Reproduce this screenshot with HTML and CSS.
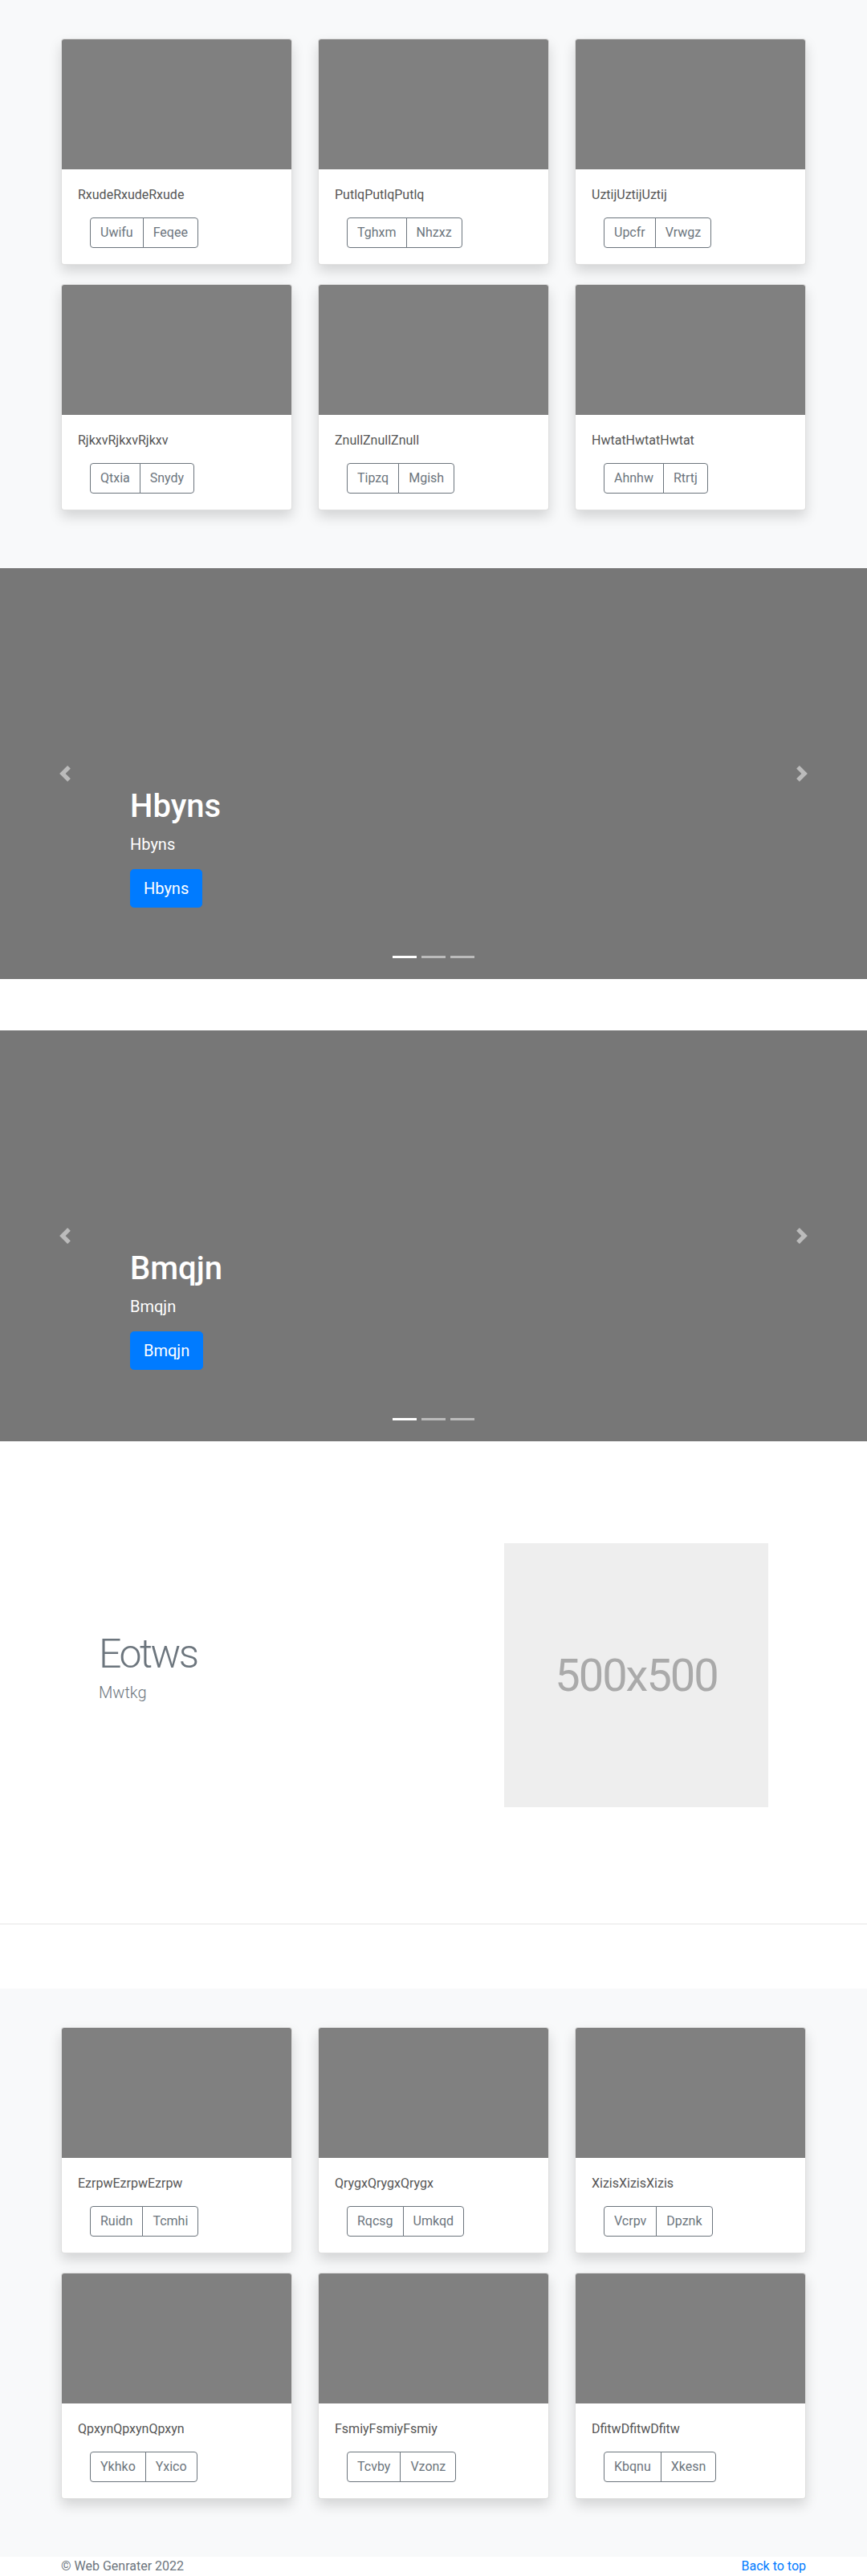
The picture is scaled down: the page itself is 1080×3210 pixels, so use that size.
FILE: index.html
```html
<!DOCTYPE html>
<html lang="en">
<head>
<meta charset="utf-8">
<title>Web Genrater</title>
<link rel="stylesheet" href="styles.css">
</head>
<body>
<main>
  <section class="album">
    <div class="grid">
      <div class="card"><div class="card-img"></div><div class="card-body"><p class="card-text">RxudeRxudeRxude</p><div class="btn-group"><button class="btn">Uwifu</button><button class="btn">Feqee</button></div></div></div>
      <div class="card"><div class="card-img"></div><div class="card-body"><p class="card-text">PutlqPutlqPutlq</p><div class="btn-group"><button class="btn">Tghxm</button><button class="btn">Nhzxz</button></div></div></div>
      <div class="card"><div class="card-img"></div><div class="card-body"><p class="card-text">UztijUztijUztij</p><div class="btn-group"><button class="btn">Upcfr</button><button class="btn">Vrwgz</button></div></div></div>
      <div class="card"><div class="card-img"></div><div class="card-body"><p class="card-text">RjkxvRjkxvRjkxv</p><div class="btn-group"><button class="btn">Qtxia</button><button class="btn">Snydy</button></div></div></div>
      <div class="card"><div class="card-img"></div><div class="card-body"><p class="card-text">ZnullZnullZnull</p><div class="btn-group"><button class="btn">Tipzq</button><button class="btn">Mgish</button></div></div></div>
      <div class="card"><div class="card-img"></div><div class="card-body"><p class="card-text">HwtatHwtatHwtat</p><div class="btn-group"><button class="btn">Ahnhw</button><button class="btn">Rtrtj</button></div></div></div>
    </div>
  </section>

  <div class="carousel">
    <ol class="indicators"><li class="active"></li><li></li><li></li></ol>
    <div class="caption">
      <h1 class="caption-title">Hbyns</h1>
      <p class="caption-text">Hbyns</p>
      <div class="caption-action"><a class="btn-primary" href="#">Hbyns</a></div>
    </div>
    <a class="control prev" href="#"><svg viewBox="0 0 8 8" width="20" height="20"><path d="M5.25 0l-4 4 4 4 1.5-1.5L4.25 4l2.5-2.5L5.25 0z"/></svg></a>
    <a class="control next" href="#"><svg viewBox="0 0 8 8" width="20" height="20"><path d="M2.75 0l-1.5 1.5L3.75 4l-2.5 2.5L2.75 8l4-4-4-4z"/></svg></a>
  </div>

  <div class="carousel">
    <ol class="indicators"><li class="active"></li><li></li><li></li></ol>
    <div class="caption">
      <h1 class="caption-title">Bmqjn</h1>
      <p class="caption-text">Bmqjn</p>
      <div class="caption-action"><a class="btn-primary" href="#">Bmqjn</a></div>
    </div>
    <a class="control prev" href="#"><svg viewBox="0 0 8 8" width="20" height="20"><path d="M5.25 0l-4 4 4 4 1.5-1.5L4.25 4l2.5-2.5L5.25 0z"/></svg></a>
    <a class="control next" href="#"><svg viewBox="0 0 8 8" width="20" height="20"><path d="M2.75 0l-1.5 1.5L3.75 4l-2.5 2.5L2.75 8l4-4-4-4z"/></svg></a>
  </div>

  <section class="feature">
    <div class="feature-text">
      <h2 class="feature-heading">Eotws</h2>
      <p class="feature-lead">Mwtkg</p>
    </div>
    <div class="placeholder">500x500</div>
  </section>

  <hr class="divider">

  <section class="album">
    <div class="grid">
      <div class="card"><div class="card-img"></div><div class="card-body"><p class="card-text">EzrpwEzrpwEzrpw</p><div class="btn-group"><button class="btn">Ruidn</button><button class="btn">Tcmhi</button></div></div></div>
      <div class="card"><div class="card-img"></div><div class="card-body"><p class="card-text">QrygxQrygxQrygx</p><div class="btn-group"><button class="btn">Rqcsg</button><button class="btn">Umkqd</button></div></div></div>
      <div class="card"><div class="card-img"></div><div class="card-body"><p class="card-text">XizisXizisXizis</p><div class="btn-group"><button class="btn">Vcrpv</button><button class="btn">Dpznk</button></div></div></div>
      <div class="card"><div class="card-img"></div><div class="card-body"><p class="card-text">QpxynQpxynQpxyn</p><div class="btn-group"><button class="btn">Ykhko</button><button class="btn">Yxico</button></div></div></div>
      <div class="card"><div class="card-img"></div><div class="card-body"><p class="card-text">FsmiyFsmiyFsmiy</p><div class="btn-group"><button class="btn">Tcvby</button><button class="btn">Vzonz</button></div></div></div>
      <div class="card"><div class="card-img"></div><div class="card-body"><p class="card-text">DfitwDfitwDfitw</p><div class="btn-group"><button class="btn">Kbqnu</button><button class="btn">Xkesn</button></div></div></div>
    </div>
  </section>
</main>

<footer class="footer">
  <p class="footer-copy">&copy; Web Genrater 2022</p>
  <p class="footer-top"><a href="#">Back to top</a></p>
</footer>
</body>
</html>
```

FILE: styles.css
```css
* { box-sizing: border-box; }

html, body { overflow-x: hidden; }

body {
  margin: 0;
  font-family: Roboto, "Liberation Sans", Arial, sans-serif;
  font-size: 16px;
  line-height: 1.5;
  color: #212529;
  background: #fff;
}

/* Album sections */
.album {
  background: #f8f9fa;
  padding: 48px 0 72px;
}

.grid {
  width: 928px;
  margin: 0 auto;
  display: grid;
  grid-template-columns: repeat(3, 288px);
  column-gap: 32px;
  row-gap: 24px;
}

.card {
  background: #fff;
  border: 1px solid rgba(0, 0, 0, 0.125);
  border-radius: 4px;
  box-shadow: 0 8px 16px rgba(0, 0, 0, 0.15);
  overflow: hidden;
}

.card-img {
  height: 162px;
  background: #808080;
}

.card-body {
  padding: 20px;
}

.card-text {
  margin: 0 0 16px;
  color: #555;
}

.btn-group {
  display: flex;
  width: max-content;
  margin-left: 15px;
}

.btn {
  font-family: inherit;
  font-size: 16px;
  line-height: 24px;
  height: 38px;
  padding: 6px 12px;
  border: 1px solid #6c757d;
  color: #6c757d;
  background: transparent;
  margin: 0;
}

.btn:first-child { border-radius: 4px 0 0 4px; }
.btn:last-child { border-radius: 0 4px 4px 0; margin-left: -1px; }

/* Carousel */
.carousel {
  position: relative;
  height: 512px;
  background: #777;
  margin-bottom: 64px;
  overflow: hidden;
}

.caption {
  position: absolute;
  left: 15%;
  right: 15%;
  bottom: 53px;
  padding: 20px 0;
  color: #fff;
}

.caption-title {
  font-size: 40px;
  font-weight: 500;
  line-height: 1.2;
  margin: 0 0 8px;
}

.caption-text {
  font-size: 20px;
  line-height: 30px;
  margin: 0 0 16px;
}

.caption-action {
  display: flex;
  margin-bottom: 16px;
}

.btn-primary {
  display: inline-block;
  padding: 8px 16px;
  font-size: 20px;
  line-height: 30px;
  border-radius: 4.8px;
  border: 1px solid #007bff;
  background: #007bff;
  color: #fff;
  text-decoration: none;
}

.indicators {
  position: absolute;
  left: 15%;
  right: 15%;
  bottom: 0;
  margin: 0 0 16px;
  padding: 0;
  list-style: none;
  display: flex;
  justify-content: center;
}

.indicators li {
  box-sizing: content-box;
  width: 30px;
  height: 3px;
  margin: 0 3px;
  background: #fff;
  background-clip: padding-box;
  border-top: 10px solid transparent;
  border-bottom: 10px solid transparent;
  opacity: 0.5;
}

.indicators li.active { opacity: 1; }

.control {
  position: absolute;
  top: 0;
  bottom: 0;
  width: 15%;
  display: flex;
  align-items: center;
  justify-content: center;
  opacity: 0.5;
}

.control svg { fill: #fff; display: block; }
.control.prev { left: 0; }
.control.next { right: 0; }

/* Feature */
.feature {
  width: 834px;
  margin: 0 auto;
  padding: 63px 0 65px;
  display: flex;
  align-items: center;
}

.feature-text { flex: 1; }

.feature-heading {
  font-size: 50px;
  font-weight: 300;
  line-height: 1;
  letter-spacing: -2.5px;
  color: #6c757d;
  margin: 0 0 8px;
}

.feature-lead {
  font-size: 20px;
  font-weight: 300;
  line-height: 30px;
  color: #6c757d;
  margin: 0 0 16px;
}

.placeholder {
  width: 329px;
  height: 329px;
  background: #eee;
  color: #aaa;
  font-size: 56px;
  line-height: 1;
  letter-spacing: -2px;
  display: flex;
  align-items: center;
  justify-content: center;
}

.divider {
  border: 0;
  border-top: 1px solid rgba(0, 0, 0, 0.1);
  height: 0;
  margin: 80px 0;
}

/* Footer */
.footer {
  width: 928px;
  height: 24px;
  margin: 0 auto;
  display: flex;
  justify-content: space-between;
  color: #6c757d;
}

.footer p { margin: 0; }
.footer a { color: #007bff; text-decoration: none; }
```
